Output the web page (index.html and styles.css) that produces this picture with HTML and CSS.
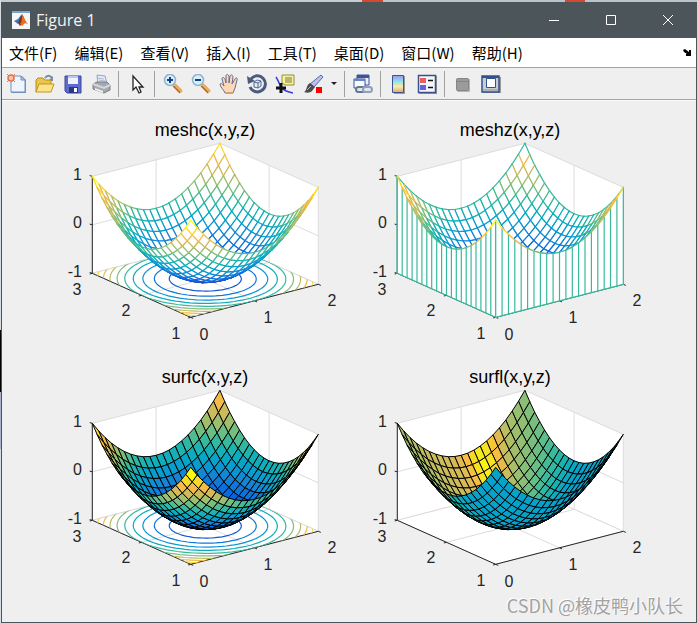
FILE: index.html
```html
<!DOCTYPE html>
<html lang="zh-CN">
<head>
    <meta charset="UTF-8">
    <meta name="viewport" content="width=device-width, initial-scale=1.0">
    <title>Figure 1</title>
    <link rel="stylesheet" href="styles.css">
</head>
<body>
    <div class="window">
        <header class="titlebar">
            <svg class="app-icon" viewBox="0 0 18 18">
                <rect width="18" height="18" fill="#f4f6f8"/>
                <rect width="18" height="2" fill="#7ba6cc"/>
                <path d="M2 10l4-2 3-4 1 2-4 7z" fill="#3a78b8"/>
                <path d="M6 12l4-9 2 4-2 6-2 2z" fill="#8c2a12"/>
                <path d="M10 3c2 2 3 7 6 10-2-1-3-1-4 0l-2 2-2-2c2-2 2-6 2-10z" fill="#e3702a"/>
            </svg>
            <h1>Figure 1</h1>
            <div class="window-buttons">
                <button type="button" aria-label="Minimize"><svg viewBox="0 0 12 12"><path d="M1 6.500h10"/></svg></button>
                <button type="button" aria-label="Maximize"><svg viewBox="0 0 12 12"><path d="M1.500 1.500h9v9h-9z"/></svg></button>
                <button type="button" aria-label="Close"><svg viewBox="0 0 12 12"><path d="M1 1l10 10M11 1L1 11"/></svg></button>
            </div>
        </header>

        <nav class="menubar">
            <button type="button">文件(F)</button>
            <button type="button">编辑(E)</button>
            <button type="button">查看(V)</button>
            <button type="button">插入(I)</button>
            <button type="button">工具(T)</button>
            <button type="button">桌面(D)</button>
            <button type="button">窗口(W)</button>
            <button type="button">帮助(H)</button>
            <button type="button" class="dock" aria-label="Dock">
                <svg viewBox="0 0 9 9"><path d="M0 2l2-1 4 3V2h2v6H3V6h1L1 4z"/></svg>
            </button>
        </nav>

        <div class="toolbar">
            <button type="button" aria-label="New Figure">
                <svg viewBox="0 0 20 20">
                    <path d="M4 2h11l4 4v13H4z" fill="#7e93b8"/>
                    <path d="M4 2h10l4 4v12H4z" fill="#eef5fd" stroke="#6d8fc0"/>
                    <path d="M14 2v4h4z" fill="#b7cbe8" stroke="#6d8fc0"/>
                    <circle cx="4" cy="4" r="3" fill="#f7c6a8" stroke="#e2734a" stroke-width="1.500"/>
                    <path d="M0 0l2 2M8 0L6 2M0 8l2-2M8 8L6 6" stroke="#e2734a"/>
                </svg>
            </button>
            <button type="button" aria-label="Open File">
                <svg viewBox="0 0 20 20">
                    <path d="M10 4c2-3 5-3 7 0" fill="none" stroke="#7a8ba6" stroke-width="2"/>
                    <path d="M18 2v5h-5z" fill="#7a8ba6"/>
                    <path d="M1 18V6l2-2h5l2 2h6v4" fill="#e9c54b" stroke="#b98d1a"/>
                    <path d="M1 18l3-8h15l-3 8z" fill="#fbe48a" stroke="#c2961d"/>
                </svg>
            </button>
            <button type="button" aria-label="Save Figure">
                <svg viewBox="0 0 20 20">
                    <path d="M2 2h16v17H4l-2-2z" fill="#5b6bd0" stroke="#3b479c"/>
                    <path d="M5 2h10v8H5z" fill="#eef2fc"/>
                    <path d="M5 2h10v2H5z" fill="#b9c6ee"/>
                    <path d="M6 13h9v6H6z" fill="#2c3680"/>
                    <path d="M11 14h3v4h-3z" fill="#fff"/>
                </svg>
            </button>
            <button type="button" aria-label="Print Figure">
                <svg viewBox="0 0 20 20">
                    <path d="M6 1l8 1 2 8-9 1z" fill="#e6eefb" stroke="#8fa3c2"/>
                    <path d="M7 4l6 1M8 6l6 1" stroke="#a9b7cf"/>
                    <path d="M2 10l4-2h10l3 3v5l-6 3-11-4z" fill="#a5a9ae" stroke="#777c84"/>
                    <path d="M2 10l11 4 6-3" fill="none" stroke="#d4d7db" stroke-width="2"/>
                    <path d="M4 14l8 3v2l-8-3z" fill="#eef0f2"/>
                </svg>
            </button>
            <span class="separator"></span>
            <button type="button" aria-label="Edit Plot">
                <svg viewBox="0 0 20 20">
                    <path d="M6 2v14l3-3 3 6 2-1-2-5h4z" fill="#fff" stroke="#222" stroke-width="1.300"/>
                </svg>
            </button>
            <span class="separator"></span>
            <button type="button" aria-label="Zoom In">
                <svg viewBox="0 0 20 20">
                    <path d="M11 11l7 7" stroke="#b96f25" stroke-width="4"/>
                    <path d="M11 10l8 8" stroke="#f5b45a" stroke-width="2"/>
                    <circle cx="7" cy="6" r="5.500" fill="#d9f0fb" stroke="#8fb3d4" stroke-width="1.500"/>
                    <path d="M7 3v6M4 6h6" stroke="#173f7f" stroke-width="2"/>
                </svg>
            </button>
            <button type="button" aria-label="Zoom Out">
                <svg viewBox="0 0 20 20">
                    <path d="M11 11l7 7" stroke="#b96f25" stroke-width="4"/>
                    <path d="M11 10l8 8" stroke="#f5b45a" stroke-width="2"/>
                    <circle cx="7" cy="6" r="5.500" fill="#d9f0fb" stroke="#8fb3d4" stroke-width="1.500"/>
                    <path d="M4 6h6" stroke="#173f7f" stroke-width="2"/>
                </svg>
            </button>
            <button type="button" aria-label="Pan">
                <svg viewBox="0 0 20 20">
                    <path d="M6 19c-1-3-5-6-5-9 1-1 2-1 4 2L3 5c0-2 2-2 3 0l1 4V2c0-2 2-2 3 0v7l1-7c1-2 3-1 3 1l-1 7 3-5c1-2 3-1 2 1l-2 8-2 5z" fill="#fbd9b8" stroke="#6a6b93"/>
                    <path d="M6 19l8 0" stroke="#d7a06a" stroke-width="2"/>
                </svg>
            </button>
            <button type="button" aria-label="Rotate 3D">
                <svg viewBox="0 0 20 20">
                    <path d="M4 5a8 8 0 1 1-1 8" fill="none" stroke="#4a5b7d" stroke-width="3"/>
                    <path d="M0 2l1 8 7-3z" fill="#4a5b7d"/>
                    <path d="M7 8l3-2 4 1v5l-3 2-4-1zM7 8l4 1v5M11 9l3-2" fill="#e6ecf6" stroke="#51658c"/>
                </svg>
            </button>
            <button type="button" aria-label="Data Cursor">
                <svg viewBox="0 0 20 20">
                    <path d="M1 3c2 3 3 6 5 10 3 4 6 5 12 6" fill="none" stroke="#3c3ce0" stroke-width="1.500"/>
                    <path d="M7 1h12v10H10l-3-2z" fill="#f7f2a0" stroke="#8f8f3c"/>
                    <path d="M10 4h7M10 6h7M10 8h7" stroke="#77773a"/>
                    <path d="M6 9v10M1 14h10" stroke="#111" stroke-width="3"/>
                </svg>
            </button>
            <button type="button" aria-label="Brush Data">
                <svg viewBox="0 0 20 20">
                    <path d="M18 1l2 2-9 10-4-3z" fill="#b8c2ea" stroke="#5a6ba6"/>
                    <path d="M7 9l5 4-3 4c-2 2-5 2-8 1 3-1 2-7 6-9z" fill="#4c4c50"/>
                    <path d="M4 16l4-4" stroke="#b5b5b8"/>
                    <path d="M13 13h6v6h-6z" fill="#f00"/>
                </svg>
            </button>
            <button type="button" class="caret" aria-label="Brush options">
                <svg viewBox="0 0 6 6"><path d="M0 1h6L3 4z" fill="#222"/></svg>
            </button>
            <span class="separator"></span>
            <button type="button" aria-label="Link Plot">
                <svg viewBox="0 0 20 20">
                    <path d="M4 1h12v10H4z" fill="#e9effc" stroke="#3d549a"/>
                    <path d="M4 1h12v3H4z" fill="#3d549a"/>
                    <path d="M1 5h11v9H1z" fill="#f8faff" stroke="#3d549a"/>
                    <path d="M1 5h11v2H1z" fill="#6b84c8"/>
                    <rect x="3" y="13" width="9" height="5" rx="2.500" fill="#dfe6ee" stroke="#66788f" stroke-width="2"/>
                    <rect x="10" y="13" width="9" height="5" rx="2.500" fill="#dfe6ee" stroke="#8fa1b8" stroke-width="2"/>
                </svg>
            </button>
            <span class="separator"></span>
            <button type="button" aria-label="Insert Colorbar">
                <svg viewBox="0 0 20 20">
                    <defs>
                        <linearGradient id="rainbow" x1="0" y1="0" x2="0" y2="1">
                            <stop offset="0" stop-color="#9b98ea"/>
                            <stop offset=".35" stop-color="#8fe0f0"/>
                            <stop offset=".65" stop-color="#f5efa0"/>
                            <stop offset="1" stop-color="#ee9a86"/>
                        </linearGradient>
                    </defs>
                    <path d="M5 2h11v18H5z" fill="#9a9a9a"/>
                    <path d="M3.500 1.500h11v17h-11z" fill="url(#rainbow)" stroke="#3a5590"/>
                </svg>
            </button>
            <button type="button" aria-label="Insert Legend">
                <svg viewBox="0 0 20 20">
                    <path d="M2 2h18v18H2z" fill="#9a9a9a"/>
                    <path d="M1.500 1.500h17v17h-17z" fill="#f4f6fb" stroke="#3a4f8c" stroke-width="1.500"/>
                    <path d="M3 4h6v5H3z" fill="#e8605c"/>
                    <path d="M3 11h6v5H3z" fill="#6262e6"/>
                    <path d="M11 6.500h5M11 13.500h5" stroke="#111" stroke-width="1.500"/>
                </svg>
            </button>
            <span class="separator"></span>
            <button type="button" aria-label="Hide Plot Tools">
                <svg viewBox="0 0 20 20">
                    <rect x="4" y="5" width="13" height="13" rx="1" fill="#b5b5b5"/>
                    <rect x="3.500" y="4.500" width="12" height="12" rx="1" fill="#9b9b9b" stroke="#868686"/>
                    <path d="M4 7.500h11" stroke="#858585"/>
                </svg>
            </button>
            <button type="button" aria-label="Show Plot Tools">
                <svg viewBox="0 0 20 20">
                    <path d="M2 3h18v16H2z" fill="#9a9a9a"/>
                    <path d="M1 2h17v16H1z" fill="#c9ccd2" stroke="#33518f" stroke-width="1.500"/>
                    <path d="M1 2h17v2H1z" fill="#33518f"/>
                    <path d="M5.500 4.500h9v9h-9z" fill="#fff" stroke="#33518f"/>
                    <path d="M2 15h15v2H2z" fill="#aeb2b8"/>
                </svg>
            </button>
        </div>

        <main class="figure">
            <svg class="axes" id="meshc" viewBox="0 0 305 247"></svg>
            <svg class="axes" id="meshz" viewBox="0 0 305 247"></svg>
            <svg class="axes" id="surfc" viewBox="0 0 305 247"></svg>
            <svg class="axes" id="surfl" viewBox="0 0 305 247"></svg>
            <p class="watermark">CSDN @橡皮鸭小队长</p>
        </main>
    </div>

    <script src="plots.js"></script>
</body>
</html>
```
FILE: styles.css
```css
* {
    box-sizing: border-box;
}
body {
    margin: 0;
    min-height: 100vh;
    padding: 2px 0 0 1px;
    background:
        linear-gradient(#d5dce2 0 53%, #000 53% 63%, #a9b1cc 63% 72%, #d5dce2 72%) left / 1px 100% no-repeat,
        linear-gradient(90deg, #c3ccd3 0 52%, #d4492f 52% 55%, #b9c4cd 55% 81%, #d4492f 81% 84%, #b9c4cd 84%);
    font-family: "Open Sans", "Noto Sans CJK SC", sans-serif;
}
button {
    margin: 0;
    padding: 0;
    border: none;
    background: none;
    font: inherit;
    color: inherit;
}
svg {
    display: block;
}
.window {
    display: flex;
    flex-direction: column;
    min-height: calc(100vh - 2px);
    border: 1px solid #4c555a;
    border-top: none;
    background-color: #efefef;
}

/* title bar */
.titlebar {
    display: flex;
    align-items: center;
    height: 36px;
    padding-left: 10px;
    background-color: #4c555a;
    color: #f2f2f2;
}
.app-icon {
    width: 18px;
    height: 18px;
}
.titlebar h1 {
    margin: 0 0 0 6px;
    font-size: 16px;
    font-weight: normal;
    line-height: 20px;
}
.window-buttons {
    display: flex;
    margin-left: auto;
}
.window-buttons button {
    display: flex;
    justify-content: center;
    align-items: center;
    width: 57px;
    height: 36px;
}
.window-buttons svg {
    width: 12px;
    height: 12px;
    fill: none;
    stroke: #fff;
}

/* menu */
.menubar {
    display: flex;
    align-items: center;
    gap: 17px;
    height: 30px;
    padding: 0 4px 0 7px;
    border-bottom: 1px solid #a0a4a4;
    background-color: #fff;
    color: #000;
    font-family: "Noto Sans CJK SC", sans-serif;
    font-size: 15px;
    line-height: 20px;
    white-space: nowrap;
}
.dock {
    margin-left: auto;
}
.dock svg {
    width: 9px;
    height: 9px;
}

/* toolbar */
.toolbar {
    display: flex;
    align-items: center;
    height: 32px;
    padding-left: 1px;
    border-bottom: 1px solid #a0a4a4;
}
.toolbar button {
    display: flex;
    justify-content: center;
    width: 28px;
}
.toolbar svg {
    width: 20px;
    height: 20px;
}
.toolbar .caret {
    width: 14px;
}
.toolbar .caret svg {
    width: 6px;
    height: 6px;
}
.separator {
    width: 1px;
    height: 26px;
    margin: 0 4px 0 3px;
    background-color: #a0a0a0;
}

/* plots */
.figure {
    position: relative;
    display: grid;
    grid-template-columns: 1fr 1fr;
    align-content: start;
    flex: 1;
    padding: 7px 39px 18px 45px;
    border-top: 1px solid #fafafa;
}
.axes {
    width: 100%;
    overflow: visible;
    font-family: "Liberation Sans", Arial, sans-serif;
}
.axes .title {
    font-size: 18px;
    fill: #000;
    text-anchor: middle;
}
.axes .tick-label {
    font-size: 16px;
    fill: #262626;
    text-anchor: middle;
}
.axes .z-label {
    text-anchor: end;
}
.wall {
    fill: #fff;
    stroke: #dcdcdc;
}
.grid-line {
    fill: none;
    stroke: #dcdcdc;
}
.axis-line {
    fill: none;
    stroke: #262626;
}
.contour {
    fill: none;
    stroke-width: 1.2;
}
.face {
    stroke: none;
}
.edge {
    fill: none;
    stroke-width: 1.2;
    stroke-linecap: round;
}
.surf-face {
    stroke: #000;
    stroke-linejoin: round;
}
.watermark {
    position: absolute;
    right: 13px;
    bottom: 5px;
    margin: 0;
    color: #a3a3a3;
    font-family: "Noto Sans CJK SC", sans-serif;
    font-size: 18px;
    line-height: 24px;
    text-shadow: -1px -1px 0 #fff;
}
```
FILE: plots.js
```js
// z = (x-1)^2 + (y-2)^2 - 1 on x = 0:0.1:2, y = 1:0.1:3
const N = 20;
const parula = [
    [53, 42, 135], [50, 67, 186], [3, 99, 225], [13, 117, 220], [20, 133, 212], [9, 153, 209],
    [6, 167, 198], [24, 178, 178], [56, 185, 158], [102, 190, 134], [146, 191, 115],
    [183, 189, 100], [217, 186, 86], [244, 185, 72], [252, 206, 46], [245, 228, 32], [249, 251, 14]
];

const xAt = i => i * 2 / N;
const yAt = j => 1 + j * 2 / N;
const height = (x, y) => (x - 1) ** 2 + (y - 2) ** 2 - 1;

function project(x, y, z) {
    const px = 143.7 + x / 2 * 127.6 - (y - 1) / 2 * 98.4;
    const py = 209.3 - x / 2 * 33 - (y - 1) / 2 * 44 - (z + 1) / 2 * 97;
    return px.toFixed(1) + " " + py.toFixed(1);
}

function line(points, close) {
    return "M" + points.map(p => project(p[0], p[1], p[2])).join("L") + (close ? "Z" : "");
}

function colour(t) {
    t = Math.min(Math.max(t, 0), 1) * 16;
    const k = Math.min(Math.floor(t), 15);
    const rgb = parula[k].map((c, n) => Math.round(c + (parula[k + 1][n] - c) * (t - k)));
    return "rgb(" + rgb.join(",") + ")";
}

function path(cls, d, attrs) {
    return `<path class="${cls}" d="${d}" ${attrs || ""}/>`;
}

function drawBox() {
    let out = "";
    out += path("wall", line([[0, 3, -1], [2, 3, -1], [2, 3, 1], [0, 3, 1]], true));
    out += path("wall", line([[2, 1, -1], [2, 3, -1], [2, 3, 1], [2, 1, 1]], true));
    out += path("wall", line([[0, 1, -1], [2, 1, -1], [2, 3, -1], [0, 3, -1]], true));
    out += path("grid-line", line([[1, 1, -1], [1, 3, -1], [1, 3, 1]]));
    out += path("grid-line", line([[0, 2, -1], [2, 2, -1], [2, 2, 1]]));
    out += path("grid-line", line([[0, 3, 0], [2, 3, 0], [2, 1, 0]]));
    return out;
}

function drawAxes() {
    let out = path("axis-line", line([[0, 3, 1], [0, 3, -1], [0, 1, -1], [2, 1, -1]]));
    for (const v of [0, 1, 2]) {
        out += path("axis-line", line([[v, 1, -1], [v, 0.95, -1]]));
        out += path("axis-line", line([[0, v + 1, -1], [-0.04, v + 1, -1]]));
        out += path("axis-line", line([[0, 3, v - 1], [-0.01, 3.04, v - 1]]));
    }
    return out;
}

function drawLabels(title) {
    const labels = [
        [30, 187, "3"], [79, 208, "2"], [129, 231, "1"],
        [157, 232, "0"], [221, 215, "1"], [285, 198, "2"]
    ];
    let out = `<text class="title" x="158" y="28">${title}</text>`;
    for (const [x, y, s] of labels) {
        out += `<text class="tick-label" x="${x}" y="${y}">${s}</text>`;
    }
    for (const [y, s] of [[72, "1"], [120, "0"], [169, "-1"]]) {
        out += `<text class="tick-label z-label" x="35" y="${y}">${s}</text>`;
    }
    return out;
}

function drawContours(id) {
    let out = `<clipPath id="${id}-floor"><path d="${line([[0, 1, -1], [2, 1, -1], [2, 3, -1], [0, 3, -1]], true)}"/></clipPath>`;
    for (let n = 1; n < 10; n++) {
        const r = Math.sqrt(n / 5);
        const points = [];
        for (let a = 0; a < 360; a += 4) {
            const t = a * Math.PI / 180;
            points.push([1 + r * Math.cos(t), 2 + r * Math.sin(t), -1]);
        }
        out += path("contour", line(points, true), `stroke="${colour(n / 10)}" clip-path="url(#${id}-floor)"`);
    }
    return out;
}

// cells from the far corner to the near one, so that near ones cover far ones
function drawCells(drawCell) {
    let out = "";
    for (let s = 2 * N - 2; s >= 0; s--) {
        for (let i = 0; i < N; i++) {
            const j = s - i;
            if (j < 0 || j >= N) continue;
            const corners = [[i, j], [i + 1, j], [i + 1, j + 1], [i, j + 1]].map(([a, b]) => {
                const x = xAt(a), y = yAt(b);
                return [x, y, height(x, y)];
            });
            out += drawCell(corners, i, j);
        }
    }
    return out;
}

function edge(a, b, c) {
    return path("edge", line([a, b]), `stroke="${c}"`);
}

function drawMesh(rim) {
    const zColour = p => colour((p[2] + 1) / 2);
    return drawCells((c, i, j) =>
        path("face", line(c, true), 'fill="#fff"') +
        edge(c[1], c[2], rim && i === N - 1 ? rim : zColour(c[1])) +
        edge(c[3], c[2], rim && j === N - 1 ? rim : zColour(c[3])) +
        edge(c[0], c[1], zColour(c[0])) +
        edge(c[0], c[3], zColour(c[0]))
    );
}

function drawCurtain(side) {
    const c = colour(0.5);
    const tops = [];
    for (let k = 0; k <= N; k++) {
        const [x, y] = side(k);
        tops.push([x, y, height(x, y)]);
    }
    const first = tops[0], last = tops[N];
    let out = path("face", line([...tops, [last[0], last[1], -1], [first[0], first[1], -1]], true), 'fill="#fff"');
    for (const p of tops) {
        out += edge(p, [p[0], p[1], -1], c);
    }
    out += edge([first[0], first[1], -1], [last[0], last[1], -1], c);
    return out;
}

function drawRim(side) {
    let out = "";
    for (let k = 0; k < N; k++) {
        const a = side(k), b = side(k + 1);
        const z = height(a[0], a[1]);
        out += edge([a[0], a[1], z], [b[0], b[1], height(b[0], b[1])], colour((z + 1) / 2));
    }
    return out;
}

function drawSurf(value) {
    return drawCells(c => path("surf-face", line(c, true), `fill="${colour(value(c[0]))}"`));
}

// ambient + diffuse + specular, light 45 degrees from the viewer
function shade(p) {
    const direction = az => {
        const a = az * Math.PI / 180, e = Math.PI / 6;
        return [Math.sin(a) * Math.cos(e), -Math.cos(a) * Math.cos(e), Math.sin(e)];
    };
    const dot = (a, b) => a[0] * b[0] + a[1] * b[1] + a[2] * b[2];
    const view = direction(-37.5), light = direction(7.5);
    let n = [-2 * (p[0] - 1), -2 * (p[1] - 2), 1];
    const len = Math.hypot(...n);
    n = n.map(v => v / len);
    const diffuse = Math.max(0, dot(n, light));
    const specular = Math.max(0, 2 * dot(n, light) * dot(n, view) - dot(view, light)) ** 10;
    return (0.55 + 0.6 * diffuse + 0.4 * specular) / 1.55;
}

function render(id, body) {
    document.getElementById(id).innerHTML = body + drawLabels(id + "(x,y,z)");
}

const nearLeft = k => [0, yAt(k)];
const nearRight = k => [xAt(k), 1];
const farLeft = k => [xAt(k), 3];
const farRight = k => [2, yAt(k)];

render("meshc", drawBox() + drawAxes() + drawContours("meshc") + drawMesh());
render("meshz", drawBox() + drawAxes() + drawCurtain(farLeft) + drawCurtain(farRight) +
    drawMesh(colour(0.5)) + drawCurtain(nearLeft) + drawCurtain(nearRight) +
    drawRim(nearLeft) + drawRim(nearRight));
render("surfc", drawBox() + drawAxes() + drawContours("surfc") + drawSurf(p => (p[2] + 1) / 2));
render("surfl", drawBox() + drawAxes() + drawSurf(shade));
```
